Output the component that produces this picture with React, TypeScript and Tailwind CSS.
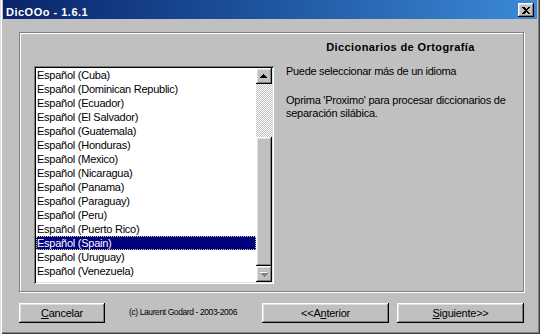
const languages = [
  'Español (Cuba)',
  'Español (Dominican Republic)',
  'Español (Ecuador)',
  'Español (El Salvador)',
  'Español (Guatemala)',
  'Español (Honduras)',
  'Español (Mexico)',
  'Español (Nicaragua)',
  'Español (Panama)',
  'Español (Paraguay)',
  'Español (Peru)',
  'Español (Puerto Rico)',
  'Español (Spain)',
  'Español (Uruguay)',
  'Español (Venezuela)',
];

const raised =
  'bg-[#c0c0c0] shadow-[inset_-1px_-1px_0_#000,inset_1px_1px_0_#fff,inset_-2px_-2px_0_#808080,inset_2px_2px_0_#dfdfdf]';

const Arrow = ({ down, disabled }: { down?: boolean; disabled?: boolean }) => (
  <svg
    width="8"
    height="5"
    viewBox="0 0 8 5"
    shapeRendering="crispEdges"
    className={down ? 'rotate-180' : ''}
  >
    {disabled && (
      <path d="M4 1h1v1h1v1h1v1h1v1H1V4h1V3h1V2h1z" fill="#fff" />
    )}
    <path
      d="M3 0h1v1h1v1h1v1h1v1H0V3h1V2h1V1h1z"
      fill={disabled ? '#808080' : '#000'}
    />
  </svg>
);

const Button = ({ children, width }: { children: React.ReactNode; width: string }) => (
  <div className={`${raised} ${width} h-[20px] flex items-center justify-center text-[11px] leading-[13px] tracking-[-0.25px] text-black`}>
    {children}
  </div>
);

export default function App() {
  return (
    <div className="w-[540px] h-[334px] bg-[#c0c0c0] px-[3px] flex flex-col font-['Liberation_Sans',Arial,sans-serif] shadow-[inset_1px_0_0_#dfdfdf,inset_2px_0_0_#fff,inset_-1px_-1px_0_#404040,inset_-2px_-2px_0_#808080]">
      {/* Title bar */}
      <div className="h-[19px] flex items-start justify-between bg-gradient-to-r from-[#0a246a] to-[#3c8ad8] pl-[3px] pr-[3px]">
        <span className="pt-[6px] text-[11px] leading-[13px] font-bold tracking-[0.5px] text-white">
          DicOOo - 1.6.1
        </span>
        <div className={`${raised} mt-[3px] w-[16px] h-[14px] flex items-center justify-center`}>
          <svg width="8" height="7" viewBox="0 0 8 7" shapeRendering="crispEdges">
            <path d="M0 0h2l2 2 2-2h2L5 3.5 8 7H6L4 5 2 7H0l3-3.5z" fill="#000" />
          </svg>
        </div>
      </div>

      <div className="pl-[16px] pt-[13px] flex flex-col">
        {/* Group box */}
        <div className="w-[505px] h-[260px] border border-[#808080] shadow-[inset_1px_1px_0_#fff,1px_1px_0_#fff] pl-[14px] pr-[8px] pt-[8px] flex">
          <div className="pt-[25px]">
            <div className="w-[240px] h-[218px] p-[2px] bg-white shadow-[inset_1px_1px_0_#808080,inset_-1px_-1px_0_#fff,inset_2px_2px_0_#000,inset_-2px_-2px_0_#dfdfdf] flex">
              <div className="w-[220px] h-[214px] overflow-hidden text-[11px] tracking-[-0.25px] text-black">
                {languages.map((lang) => {
                  const selected = lang === 'Español (Spain)';
                  return (
                    <div
                      key={lang}
                      className={
                        selected
                          ? 'h-[14px] leading-[14px] pl-[1px] whitespace-nowrap bg-[#000080] text-white outline outline-1 outline-dotted outline-[#d8d880] -outline-offset-1'
                          : 'h-[14px] leading-[14px] pl-[1px] whitespace-nowrap'
                      }
                    >
                      {lang}
                    </div>
                  );
                })}
              </div>
              {/* Scrollbar */}
              <div className="w-[16px] h-[214px] flex flex-col">
                <div className={`${raised} h-[16px] flex items-center justify-center`}>
                  <Arrow />
                </div>
                <div className="h-[53px] bg-[repeating-conic-gradient(#c0c0c0_0_25%,#ffffff_0_50%)] bg-[length:2px_2px]" />
                <div className={`${raised} h-[129px]`} />
                <div className={`${raised} h-[16px] flex items-center justify-center`}>
                  <Arrow down disabled />
                </div>
              </div>
            </div>
          </div>

          <div className="ml-[12px] flex-1 flex flex-col text-[11px] leading-[13px] text-black">
            <div className="text-center font-bold tracking-[0.4px]">Diccionarios de Ortografía</div>
            <p className="mt-[11px] tracking-[-0.3px]">Puede seleccionar más de un idioma</p>
            <p className="mt-[16px] tracking-[-0.25px]">
              Oprima 'Proximo' para procesar diccionarios de
              <br />
              separación silábica.
            </p>
          </div>
        </div>

        {/* Buttons */}
        <div className="mt-[11px] flex items-start">
          <Button width="w-[86px]">
            <span>
              <span className="underline">C</span>ancelar
            </span>
          </Button>
          <span className="ml-[24px] mt-[4px] text-[8.5px] leading-[10px] tracking-[-0.4px] text-black">
            (c) Laurent Godard - 2003-2006
          </span>
          <div className="ml-auto mr-[13px] flex gap-[8px]">
            <Button width="w-[127px]">
              <span>
                &lt;&lt;A<span className="underline">n</span>terior
              </span>
            </Button>
            <Button width="w-[127px]">
              <span>
                <span className="underline">S</span>iguiente&gt;&gt;
              </span>
            </Button>
          </div>
        </div>
      </div>
    </div>
  );
}
